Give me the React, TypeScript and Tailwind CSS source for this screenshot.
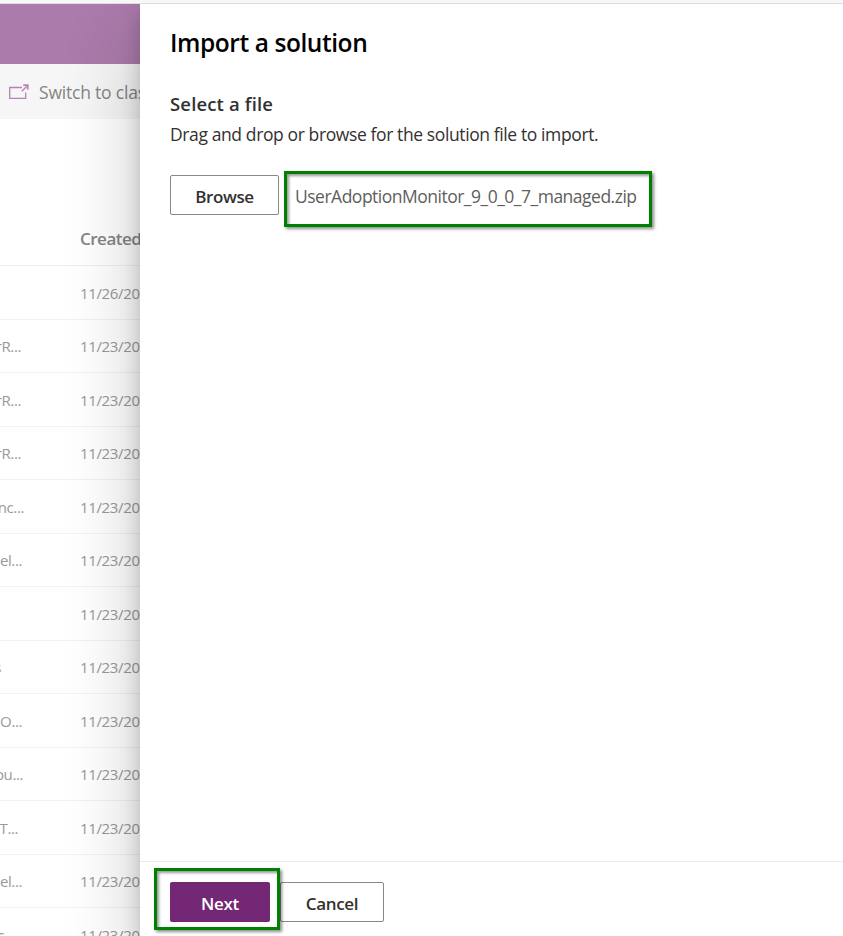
const rows = [
  { name: "", right: 0, date: "11/26/20" },
  { name: "rR...", right: 21, date: "11/23/20" },
  { name: "rR...", right: 21, date: "11/23/20" },
  { name: "rR...", right: 21, date: "11/23/20" },
  { name: "Sync...", right: 24, date: "11/23/20" },
  { name: "Model...", right: 22, date: "11/23/20" },
  { name: "", right: 0, date: "11/23/20" },
  { name: "s", right: 1, date: "11/23/20" },
  { name: "O...", right: 22, date: "11/23/20" },
  { name: "You...", right: 23, date: "11/23/20" },
  { name: "T...", right: 18, date: "11/23/20" },
  { name: "Model...", right: 22, date: "11/23/20" },
  { name: "c", right: 4, date: "11/23/20" },
];

function SwitchIcon() {
  return (
    <svg className="absolute left-[9px] top-[20px]" width="20" height="16" viewBox="0 0 20 16" fill="none" stroke="#b583b5" strokeWidth="1.3">
      <path d="M13 3.5H.7v10.8h16V8.5" />
      <path d="M12.8 7.2l5-5" />
      <path d="M14.3 1.2h4.4v4.4" strokeWidth="1.8" />
    </svg>
  );
}

function Highlight({ className }: { className: string }) {
  return (
    <div
      className={`pointer-events-none absolute border-[3px] border-[#008000] shadow-[2px_2px_3px_rgba(0,0,0,0.45),inset_2px_2px_3px_rgba(0,0,0,0.4)] ${className}`}
    />
  );
}

export default function App() {
  return (
    <div className="flex h-[936px] w-[843px] flex-col overflow-hidden bg-white font-['Open_Sans','Noto_Sans',sans-serif]">
      <div className="h-1 shrink-0 border-b border-[#dcdcdc] bg-[#f7f7f7]" />
      <div className="flex min-h-0 flex-1 overflow-hidden">
        <div className="w-[140px] shrink-0 whitespace-nowrap">
          <div className="h-[60px] bg-[#ab7bab]" />
          <div className="relative h-[55px] w-[140px] overflow-hidden bg-[#f6f6f6]">
            <SwitchIcon />
            <div className="pl-[39px] text-[17.5px] leading-[56px] tracking-[-0.2px] text-[#858585]">Switch to classic</div>
          </div>
          <div className="h-[147px] overflow-hidden border-b border-[#f0f0f0] pl-[80px] pt-[107px] text-[17px] font-semibold leading-[26px] tracking-[-0.5px] text-[#858585]">
            Created
          </div>
          {rows.map((row, i) => (
            <div key={i} className="flex h-[53.5px] items-center border-b border-[#f2f2f2] pt-px text-[15px] text-[#999]">
              <div className="flex w-[80px] shrink-0">
                <div className="flex shrink-0 justify-end" style={{ width: row.right }}>
                  <span className="tracking-[-0.4px]">{row.name}</span>
                </div>
              </div>
              <div className="tracking-[-0.35px]">{row.date}</div>
            </div>
          ))}
        </div>

        <div className="relative flex w-[703px] shrink-0 flex-col whitespace-nowrap bg-white shadow-[0_32px_72px_rgba(0,0,0,0.22),0_6px_18px_rgba(0,0,0,0.18)]">
          <div className="flex-1 pl-[30px] pt-[21px]">
            <h1 className="text-[24.5px] font-semibold leading-[36px] tracking-[-0.43px] text-black">Import a solution</h1>
            <h2 className="mt-[30px] text-[18.5px] font-semibold leading-[26px] tracking-[0.15px] text-[#323130]">Select a file</h2>
            <p className="mt-[4px] text-[17.5px] leading-[26px] tracking-[-0.39px] text-[#323130]">
              Drag and drop or browse for the solution file to import.
            </p>
            <div className="mt-[28px] flex items-center">
              <button className="h-[40px] w-[109px] rounded-[2px] border border-[#8a8886] pt-[3px] text-[17px] font-semibold tracking-[-0.4px] text-[#323130]">
                Browse
              </button>
              <span className="ml-4 pt-px text-[17.5px] leading-[26px] tracking-[-0.5px] text-[#605e5c]">UserAdoptionMonitor_9_0_0_7_managed.zip</span>
            </div>
          </div>
          <div className="flex h-[75px] shrink-0 gap-[10px] border-t border-[#eaeaea] pl-[30px] pt-[20px]">
            <button className="h-[40px] w-[100px] rounded-[2px] bg-[#742774] pt-[3px] text-[17px] font-semibold tracking-[-0.3px] text-white">Next</button>
            <button className="h-[40px] w-[104px] rounded-[2px] border border-[#8a8886] pt-[3px] text-[17px] font-semibold tracking-[-0.3px] text-[#323130]">
              Cancel
            </button>
          </div>
          <Highlight className="left-[144px] top-[167px] h-[56px] w-[368px]" />
          <Highlight className="left-[14px] top-[864px] h-[62px] w-[126px]" />
        </div>
      </div>
    </div>
  );
}
